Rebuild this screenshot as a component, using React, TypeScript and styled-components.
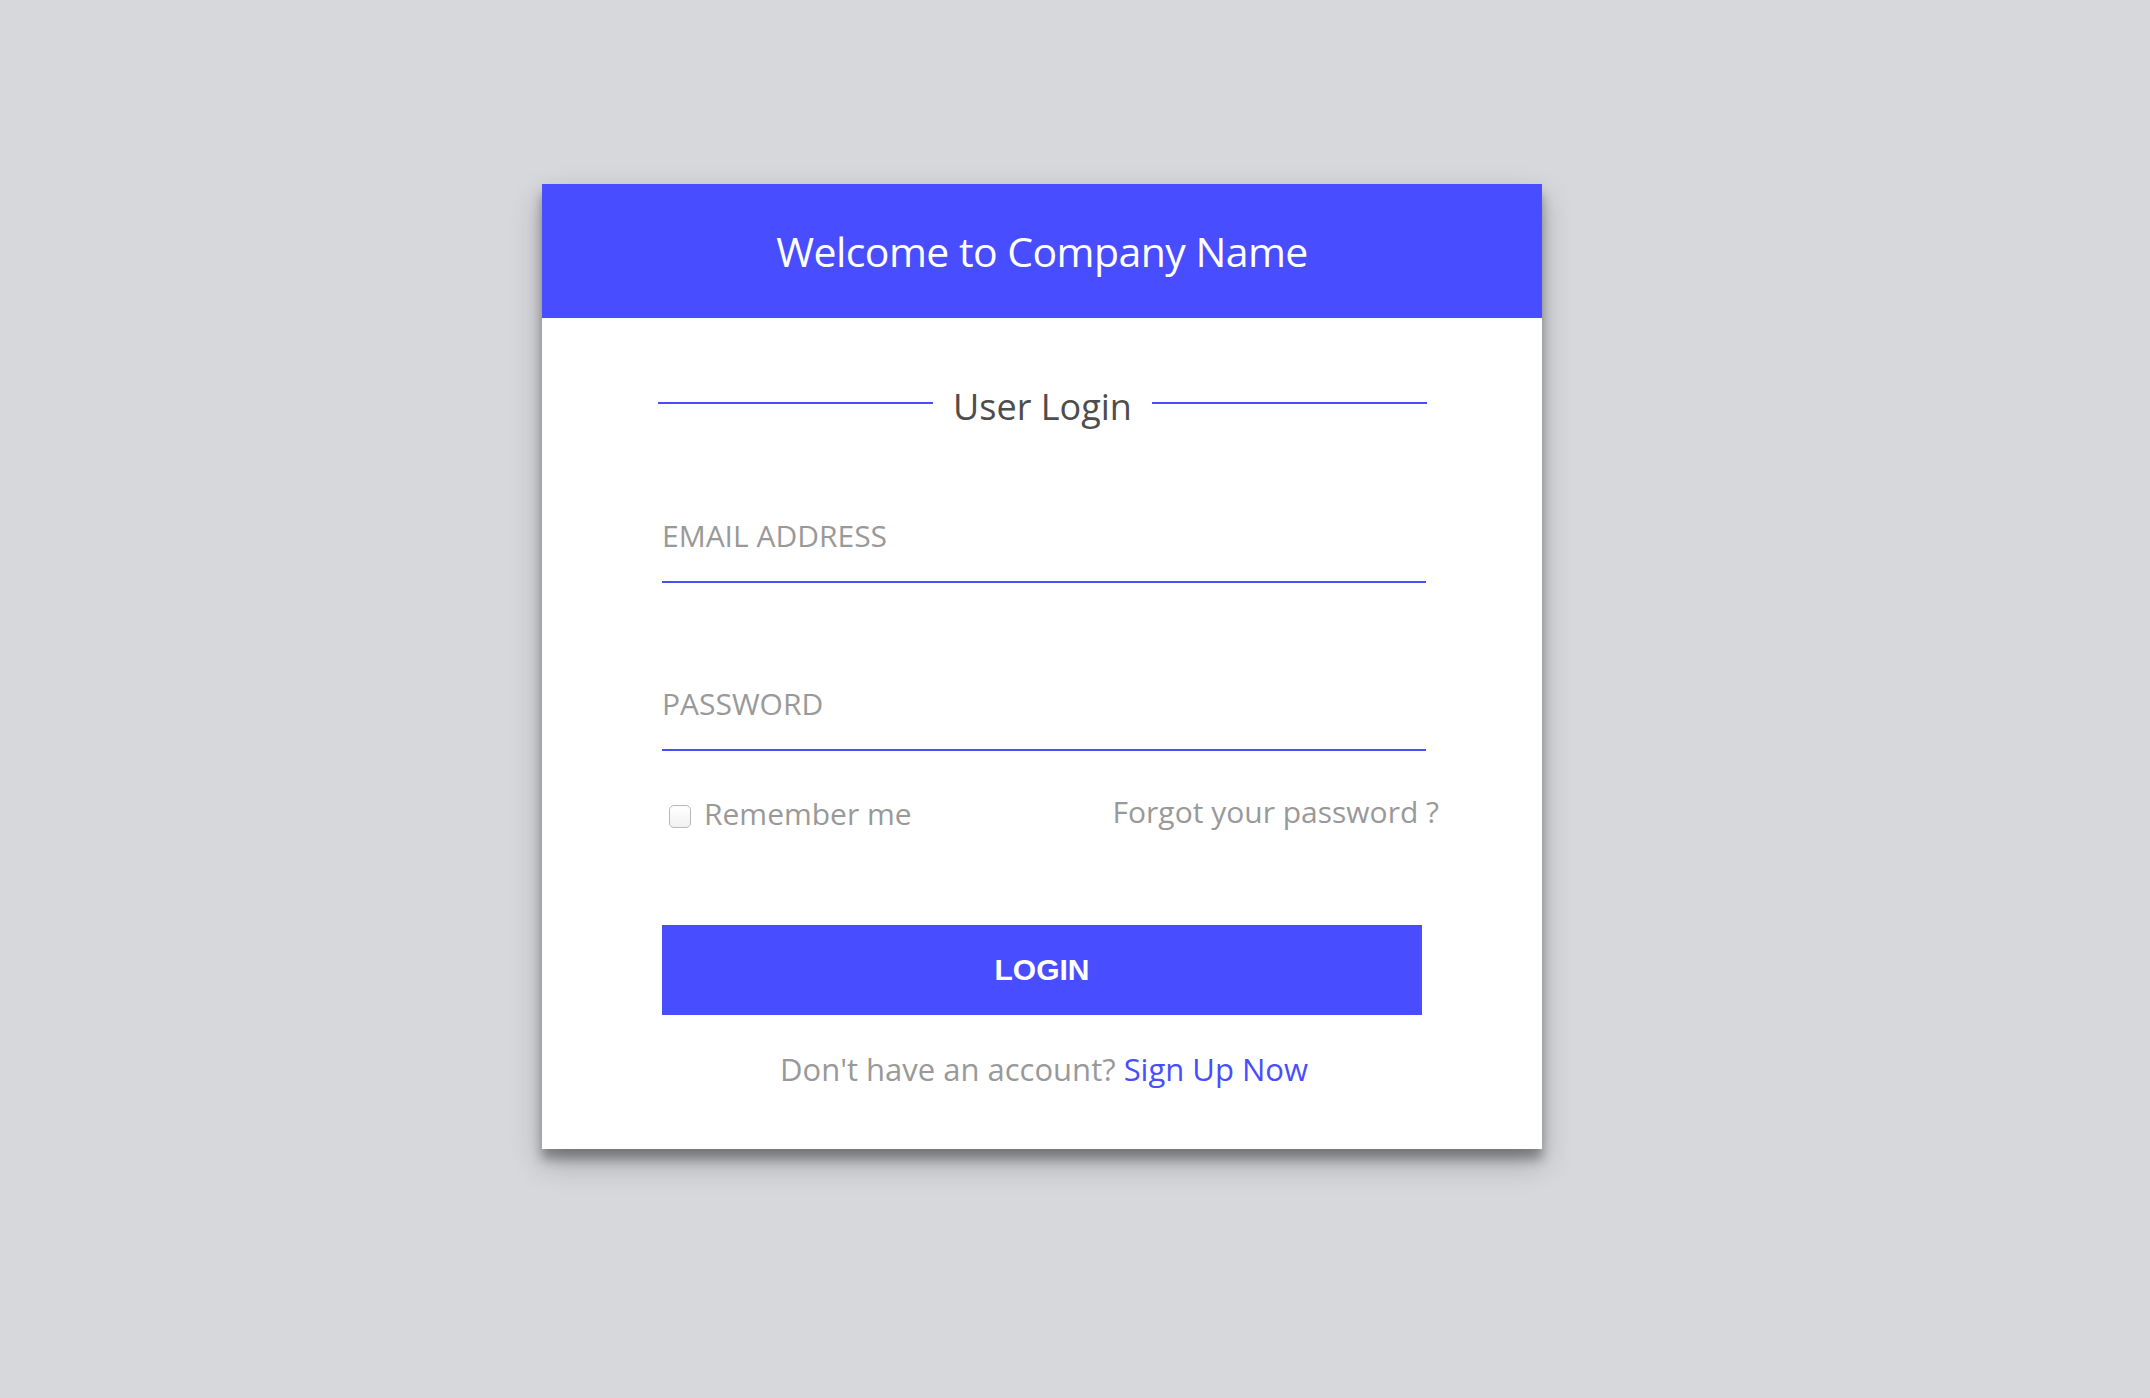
import React from "react";
import styled, { createGlobalStyle } from "styled-components";

const GlobalStyle = createGlobalStyle`
  html, body {
    margin: 0;
    padding: 0;
    background: #d7d8dc;
    font-family: "Open Sans", "Noto Sans", sans-serif;
  }
  * { box-sizing: border-box; }
`;

const BLUE = "#484dff";

const Page = styled.div`
  min-height: 1398px;
  padding: 184px 0 0 542px;
`;

const Card = styled.div`
  width: 1000px;
  background: #ffffff;
  box-shadow: 0 10px 10px rgba(0, 0, 0, 0.3), 0 14px 28px rgba(0, 0, 0, 0.25);
`;

const Header = styled.header`
  height: 134px;
  background: ${BLUE};
  display: flex;
  align-items: center;
  justify-content: center;
`;

const Title = styled.h1`
  margin: 0;
  font-size: 41px;
  line-height: 1;
  letter-spacing: -0.55px;
  font-weight: 400;
  color: #ffffff;
`;

const Body = styled.div`
  padding: 63px 116px 60px 120px;
  display: flex;
  flex-direction: column;
`;

const SectionTitle = styled.div`
  display: flex;
  align-items: center;
  gap: 20px;
  margin: 0 -1px 0 -4px;
`;

const Rule = styled.span`
  flex: 1;
  height: 2px;
  background: ${BLUE};
`;

const SectionText = styled.h2`
  margin: 0;
  padding-top: 8px;
  font-size: 36px;
  line-height: 1;
  font-weight: 400;
  color: #4d4d4d;
`;

const Field = styled.input<{ $gap: number }>`
  display: block;
  width: 100%;
  margin-top: ${(p) => p.$gap}px;
  height: 68px;
  padding: 0 0 26px 0;
  border: none;
  border-bottom: 2px solid ${BLUE};
  outline: none;
  background: transparent;
  font-family: "Open Sans", "Noto Sans", sans-serif;
  font-size: 30px;
  color: #555;
  &::placeholder {
    color: #999999;
    opacity: 1;
  }
`;

const OptionsRow = styled.div`
  margin-top: 43px;
  margin-right: -13px;
  display: flex;
  justify-content: space-between;
  align-items: flex-start;
`;

const Remember = styled.label`
  display: flex;
  align-items: flex-start;
  gap: 13px;
  margin-left: 7px;
  font-size: 30px;
  line-height: 40px;
  color: #999999;
  cursor: pointer;
`;

const Check = styled.input`
  appearance: none;
  margin: 11px 0 0 0;
  width: 22px;
  height: 23px;
  border: 1px solid #b9b9b9;
  border-radius: 5px;
  background: linear-gradient(#ffffff, #f1f1f1);
`;

const Forgot = styled.a`
  font-size: 30px;
  line-height: 36px;
  color: #999999;
  text-decoration: none;
`;

const LoginButton = styled.button`
  margin-top: 91px;
  width: 760px;
  height: 90px;
  border: none;
  background: ${BLUE};
  color: #ffffff;
  font-family: "Liberation Sans", Arial, sans-serif;
  font-weight: 700;
  font-size: 30px;
  cursor: pointer;
`;

const Footer = styled.p`
  margin: 34px 0 0 0;
  text-align: center;
  font-size: 31px;
  line-height: 40px;
  color: #999999;
`;

const SignUp = styled.a`
  color: ${BLUE};
  text-decoration: none;
`;

export default function App() {
  return (
    <>
      <GlobalStyle />
      <Page>
        <Card>
          <Header>
            <Title>Welcome to Company Name</Title>
          </Header>
          <Body>
            <SectionTitle>
              <Rule />
              <SectionText>User Login</SectionText>
              <Rule />
            </SectionTitle>
            <Field $gap={90} type="email" placeholder="EMAIL ADDRESS" />
            <Field $gap={100} type="password" placeholder="PASSWORD" />
            <OptionsRow>
              <Remember>
                <Check type="checkbox" />
                Remember me
              </Remember>
              <Forgot href="#">Forgot your password ?</Forgot>
            </OptionsRow>
            <LoginButton>LOGIN</LoginButton>
            <Footer>
              Don't have an account? <SignUp href="#">Sign Up Now</SignUp>
            </Footer>
          </Body>
        </Card>
      </Page>
    </>
  );
}
